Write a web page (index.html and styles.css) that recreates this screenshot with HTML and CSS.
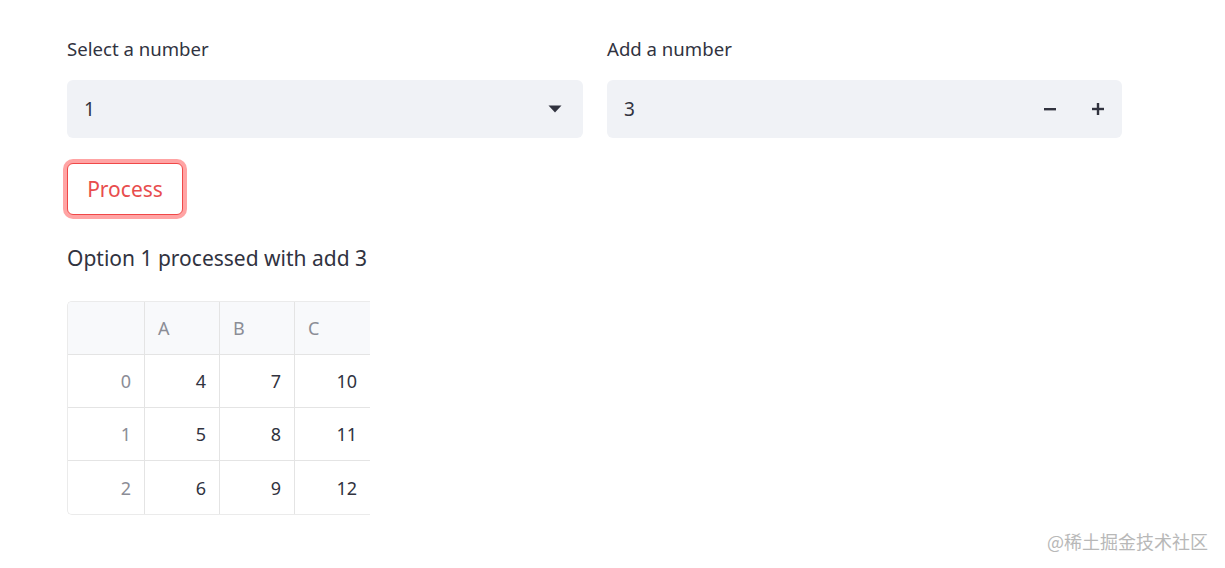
FILE: index.html
```html
<!DOCTYPE html>
<html>
<head>
<meta charset="utf-8">
<link rel="stylesheet" href="styles.css">
</head>
<body>
<main class="page">
  <div class="row">
    <div class="field">
      <label class="label">Select a number</label>
      <div class="box select">
        <span class="value">1</span>
        <svg class="caret" width="14" height="8" viewBox="0 0 14 8"><path d="M0.5 0.5 L13.5 0.5 L7 7.5 Z" fill="#31333f"/></svg>
      </div>
    </div>
    <div class="field">
      <label class="label">Add a number</label>
      <div class="box number">
        <span class="value">3</span>
        <div class="steps">
          <svg width="14" height="14" viewBox="0 0 14 14"><rect x="1" y="6" width="12" height="2.4" fill="#31333f"/></svg>
          <svg width="14" height="14" viewBox="0 0 14 14"><rect x="1" y="5.8" width="12" height="2.4" fill="#31333f"/><rect x="5.8" y="1" width="2.4" height="12" fill="#31333f"/></svg>
        </div>
      </div>
    </div>
  </div>
  <button class="btn">Process</button>
  <p class="result">Option 1 processed with add 3</p>
  <div class="table">
    <div class="cell head"></div><div class="cell head">A</div><div class="cell head">B</div><div class="cell head last">C</div>
    <div class="cell idx">0</div><div class="cell">4</div><div class="cell">7</div><div class="cell last">10</div>
    <div class="cell idx">1</div><div class="cell">5</div><div class="cell">8</div><div class="cell last">11</div>
    <div class="cell idx">2</div><div class="cell">6</div><div class="cell">9</div><div class="cell last">12</div>
  </div>
</main>
<div class="watermark">@稀土掘金技术社区</div>
</body>
</html>
```
FILE: styles.css
```css
html, body {
  margin: 0;
  padding: 0;
  background: #ffffff;
  font-family: "Noto Sans", "Noto Sans CJK SC", sans-serif;
  color: #31333f;
}
.page {
  padding: 38px 0 0 67px;
  width: 1055px;
}
.row {
  display: grid;
  grid-template-columns: 516px 515px;
  column-gap: 24px;
}
.field {
  display: flex;
  flex-direction: column;
}
.label {
  font-size: 18.6px;
  line-height: 22px;
  height: 22px;
  margin-bottom: 20px;
}
.box {
  height: 58px;
  background: #f0f2f6;
  border-radius: 6px;
  display: flex;
  align-items: center;
  justify-content: space-between;
  font-size: 19px;
}
.select {
  padding: 0 21px 0 17px;
}
.number {
  padding: 0 17px 0 17px;
}
.caret {
  display: block;
}
.steps {
  display: flex;
  gap: 34px;
}
.steps svg { display: block; }
.btn {
  margin-top: 25px;
  width: 116px;
  height: 52px;
  border: 1px solid #f04848;
  border-radius: 6px;
  background: #fff;
  color: #e84d4d;
  font-family: "Noto Sans", sans-serif;
  font-size: 21px;
  box-shadow: 0 0 0 4px rgba(255, 90, 90, 0.55);
  padding: 0;
}
.result {
  margin: 30px 0 0 0;
  font-size: 21px;
  line-height: 26px;
}
.table {
  margin-top: 30px;
  display: grid;
  grid-template-columns: 77px 75px 75px 75px;
  grid-auto-rows: 53px;
  width: 302px;
  border: 1px solid #ebebeb;
  border-right: none;
  border-radius: 5px 0 0 5px;
  overflow: hidden;
}
.cell {
  border-right: 1px solid #e4e4e4;
  border-bottom: 1px solid #e4e4e4;
  display: flex;
  align-items: center;
  justify-content: flex-end;
  padding: 0 13px;
  font-size: 18px;
  color: #31333f;
}
.cell.last { border-right: none; }
.table .cell:nth-last-child(-n+4) { border-bottom: none; }
.head {
  background: #f8f9fb;
  color: #8b8d96;
  justify-content: flex-start;
}
.idx {
  color: #8b8d96;
}
.watermark {
  position: absolute;
  left: 1047px;
  top: 528px;
  font-size: 18px;
  color: #b8b8b8;
  font-family: "Noto Sans CJK SC", sans-serif;
}
```
